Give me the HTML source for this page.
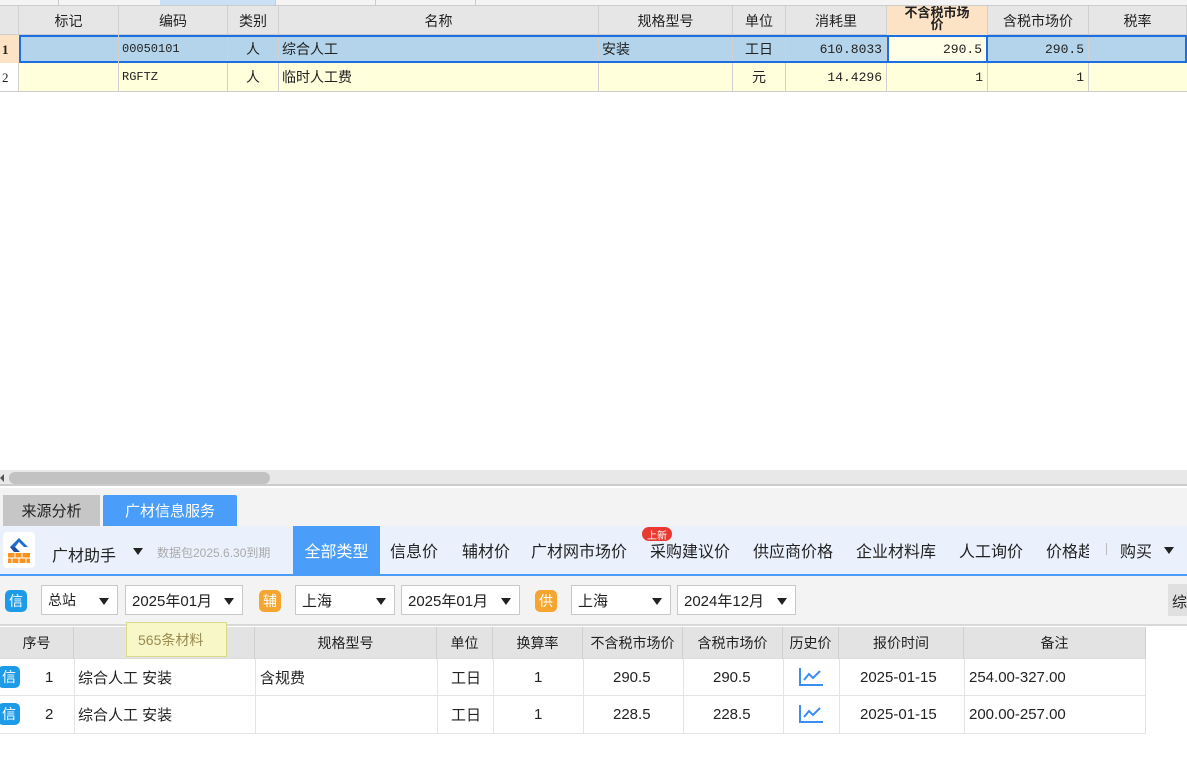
<!DOCTYPE html><html><head><meta charset="utf-8"><style>
*{margin:0;padding:0;box-sizing:border-box}
body{width:1187px;height:780px;background:#fff;position:relative;overflow:hidden;font-family:"Liberation Sans","Noto Sans CJK SC",sans-serif;color:#222}
.a{position:absolute}
.c{position:absolute;display:flex;align-items:center;justify-content:center;font-size:14px;border-right:1px solid #d0d0d0;white-space:nowrap;overflow:hidden}
.r{justify-content:flex-end;padding-right:4px;font-family:"Liberation Mono","Noto Sans CJK SC",monospace;font-size:13px}
.l{justify-content:flex-start;padding-left:3px}
.sel{position:absolute;height:30px;border:1px solid #c8c8c8;background:#fff;font-size:15px;display:flex;align-items:center;padding-left:6px}
.sel:after{content:"";position:absolute;right:8px;top:12px;border:5px solid transparent;border-top:7px solid #222}
.bd{position:absolute;width:22px;height:22px;border-radius:5px;color:#fff;font-size:14px;display:flex;align-items:center;justify-content:center}
.nav{position:absolute;top:526px;height:48px;display:flex;align-items:center;font-size:16px;color:#222;white-space:nowrap}
.t{position:absolute;height:37px;display:flex;align-items:center;font-size:15px}
</style></head><body>
<div class="a" style="left:0;top:0;width:1187px;height:6px;background:#f4f4f4;border-bottom:1px solid #ccc"></div>
<div class="a" style="left:160px;top:0;width:115px;height:5px;background:#c9e0f5"></div>
<div class="a" style="left:58px;top:0;width:1px;height:5px;background:#ccc"></div>
<div class="a" style="left:275px;top:0;width:1px;height:5px;background:#ccc"></div>
<div class="a" style="left:375px;top:0;width:1px;height:5px;background:#ccc"></div>
<div class="a" style="left:475px;top:0;width:1px;height:5px;background:#ccc"></div>
<div class="a" style="left:0;top:6px;width:1187px;height:29px;background:#e6e6e6;border-bottom:1px solid #ccc"></div>
<div class="c" style="left:0;top:6px;width:19px;height:29px"></div>
<div class="c" style="left:19px;top:6px;width:100px;height:29px">标记</div>
<div class="c" style="left:119px;top:6px;width:109px;height:29px">编码</div>
<div class="c" style="left:228px;top:6px;width:51px;height:29px">类别</div>
<div class="c" style="left:279px;top:6px;width:320px;height:29px">名称</div>
<div class="c" style="left:599px;top:6px;width:134px;height:29px">规格型号</div>
<div class="c" style="left:733px;top:6px;width:53px;height:29px">单位</div>
<div class="c" style="left:786px;top:6px;width:101px;height:29px">消耗里</div>
<div class="c" style="left:887px;top:6px;width:101px;height:29px;background:#fde3c6;font-weight:bold;font-size:13px;line-height:12px;text-align:center;white-space:normal;flex-direction:column"><span style="margin-top:-4px">不含税市场</span><span>价</span></div>
<div class="c" style="left:988px;top:6px;width:101px;height:29px">含税市场价</div>
<div class="c" style="left:1089px;top:6px;width:98px;height:29px">税率</div>
<div class="a" style="left:0;top:35px;width:19px;height:28px;background:#fde3c6;font-weight:bold;font-size:13px;font-family:'Liberation Serif',serif;padding:7px 0 0 2px">1</div>
<div class="a" style="left:19px;top:35px;width:1168px;height:28px;background:#b3d4ea;border:2px solid #1c6fe0"></div>
<div class="c l" style="left:119px;top:37px;width:109px;height:24px;font-family:'Liberation Mono',monospace;font-size:12px">00050101</div>
<div class="c" style="left:228px;top:37px;width:51px;height:24px">人</div>
<div class="c l" style="left:279px;top:37px;width:320px;height:24px">综合人工</div>
<div class="c l" style="left:599px;top:37px;width:134px;height:24px">安装</div>
<div class="c" style="left:733px;top:37px;width:53px;height:24px">工日</div>
<div class="c r" style="left:786px;top:37px;width:101px;height:24px">610.8033</div>
<div class="c r" style="left:887px;top:35px;width:101px;height:28px;background:#ffffe8;border:2px solid #1c6fe0">290.5</div>
<div class="c r" style="left:988px;top:37px;width:101px;height:24px">290.5</div>
<div class="c" style="left:1089px;top:37px;width:98px;height:24px;border:0"></div>
<div class="a" style="left:0;top:63px;width:19px;height:29px;background:#fff;font-size:13px;font-family:'Liberation Serif',serif;padding:7px 0 0 2px;border-right:1px solid #d0d0d0;border-bottom:1px solid #ccc">2</div>
<div class="a" style="left:19px;top:63px;width:1168px;height:29px;background:#ffffdc;border-bottom:1px solid #ccc"></div>
<div class="c" style="left:19px;top:63px;width:100px;height:28px"></div>
<div class="c l" style="left:119px;top:63px;width:109px;height:28px;font-family:'Liberation Mono',monospace;font-size:12px">RGFTZ</div>
<div class="c" style="left:228px;top:63px;width:51px;height:28px">人</div>
<div class="c l" style="left:279px;top:63px;width:320px;height:28px">临时人工费</div>
<div class="c" style="left:599px;top:63px;width:134px;height:28px"></div>
<div class="c" style="left:733px;top:63px;width:53px;height:28px">元</div>
<div class="c r" style="left:786px;top:63px;width:101px;height:28px">14.4296</div>
<div class="c r" style="left:887px;top:63px;width:101px;height:28px">1</div>
<div class="c r" style="left:988px;top:63px;width:101px;height:28px">1</div>
<div class="c" style="left:19px;top:35px;width:100px;height:28px;border-right:1px solid #d0d0d0;background:transparent"></div>
<div class="a" style="left:0;top:470px;width:1187px;height:16px;background:#e8e8e8;border-bottom:2px solid #ccc"></div>
<div class="a" style="left:0;top:474px;border:4px solid transparent;border-right:4px solid #555;border-left:0"></div>
<div class="a" style="left:9px;top:472px;width:261px;height:12px;border-radius:6px;background:#c2c2c2"></div>
<div class="a" style="left:0;top:488px;width:1187px;height:38px;background:#f3f3f3"></div>
<div class="a" style="left:3px;top:495px;width:97px;height:31px;background:#c6c6c6;display:flex;align-items:center;justify-content:center;font-size:15px">来源分析</div>
<div class="a" style="left:103px;top:495px;width:134px;height:31px;background:#4a9df8;color:#fff;display:flex;align-items:center;justify-content:center;font-size:15px;border-radius:2px 2px 0 0">广材信息服务</div>
<div class="a" style="left:0;top:526px;width:1187px;height:50px;background:#eaf1fd;border-bottom:2px solid #4a9df8"></div>
<div class="a" style="left:3px;top:532px;width:32px;height:36px;background:#fff;border-radius:4px"></div>
<svg class="a" style="left:6px;top:535px" width="27" height="30" viewBox="0 0 27 30"><path d="M4 12 L13 3 L22 12 L18 12 L13 7 L9 12 Z" fill="#1f6fd1"/><path d="M4 12 L9 12 L14 17 L8 17Z" fill="#1f4fa0"/><rect x="2" y="18" width="22" height="10" fill="#f7931e"/><path d="M2 23H24M9 18V23M16 18V23M6 23V28M13 23V28M20 23V28" stroke="#fff" stroke-width="1"/></svg>
<div class="a" style="left:52px;top:542px;font-size:16px">广材助手</div>
<div class="a" style="left:133px;top:548px;border:5px solid transparent;border-top:7px solid #222"></div>
<div class="a" style="left:157px;top:544px;font-size:12px;color:#aaa">数据包2025.6.30到期</div>
<div class="a" style="left:293px;top:526px;width:87px;height:48px;background:#4a9df8;color:#fff;display:flex;align-items:center;justify-content:center;font-size:16px">全部类型</div>
<div class="nav" style="left:390px">信息价</div>
<div class="nav" style="left:462px">辅材价</div>
<div class="nav" style="left:531px">广材网市场价</div>
<div class="nav" style="left:650px">采购建议价</div>
<div class="nav" style="left:753px">供应商价格</div>
<div class="nav" style="left:856px">企业材料库</div>
<div class="nav" style="left:959px">人工询价</div>
<div class="nav" style="left:1046px;width:43px;overflow:hidden">价格趋势</div>
<div class="a" style="left:1106px;top:543px;width:1px;height:12px;background:#bbb"></div>
<div class="nav" style="left:1120px">购买</div>
<div class="a" style="left:1164px;top:547px;border:5px solid transparent;border-top:7px solid #222"></div>
<div class="a" style="left:642px;top:527px;width:30px;height:14px;background:#e83a30;color:#fff;border-radius:7px;font-size:10px;display:flex;align-items:center;justify-content:center">上新</div>
<div class="a" style="left:0;top:576px;width:1187px;height:50px;background:#f3f3f3;border-bottom:2px solid #d8d8d8"></div>
<div class="bd" style="left:5px;top:590px;background:#1e9be8">信</div>
<div class="sel" style="left:41px;top:585px;width:77px;font-size:14px">总站</div>
<div class="sel" style="left:125px;top:585px;width:118px">2025年01月</div>
<div class="bd" style="left:259px;top:590px;background:#f7a531">辅</div>
<div class="sel" style="left:295px;top:585px;width:100px">上海</div>
<div class="sel" style="left:401px;top:585px;width:119px">2025年01月</div>
<div class="bd" style="left:535px;top:590px;background:#f7a531">供</div>
<div class="sel" style="left:571px;top:585px;width:100px">上海</div>
<div class="sel" style="left:677px;top:585px;width:119px">2024年12月</div>
<div class="a" style="left:1168px;top:584px;width:19px;height:32px;background:#e0e0e0;font-size:15px;padding:7px 0 0 4px;overflow:hidden">综</div>
<div class="a" style="left:0;top:627px;width:1146px;height:32px;background:#e3e3e3;border-bottom:1px solid #ddd"></div>
<div class="c" style="left:0;top:627px;width:74px;height:32px">序号</div>
<div class="c" style="left:74px;top:627px;width:181px;height:32px"></div>
<div class="c" style="left:255px;top:627px;width:182px;height:32px">规格型号</div>
<div class="c" style="left:437px;top:627px;width:56px;height:32px">单位</div>
<div class="c" style="left:493px;top:627px;width:90px;height:32px">换算率</div>
<div class="c" style="left:583px;top:627px;width:100px;height:32px">不含税市场价</div>
<div class="c" style="left:683px;top:627px;width:100px;height:32px">含税市场价</div>
<div class="c" style="left:783px;top:627px;width:56px;height:32px">历史价</div>
<div class="c" style="left:839px;top:627px;width:125px;height:32px">报价时间</div>
<div class="c" style="left:964px;top:627px;width:182px;height:32px">备注</div>
<div class="a" style="left:126px;top:622px;width:101px;height:35px;background:#f7f7c8;border:1px solid #d9d98a;color:#9a8a50;font-size:14px;padding:7px 0 0 11px">565条材料</div>
<div class="a" style="left:0;top:659px;width:1146px;height:37px;border-bottom:1px solid #e4e4e4"></div>
<div class="a" style="left:0;top:696px;width:1146px;height:38px;border-bottom:1px solid #e4e4e4"></div>
<div class="bd" style="left:-2px;top:666px;background:#1e9be8">信</div>
<div class="bd" style="left:-2px;top:703px;background:#1e9be8">信</div>
<div class="t" style="left:45px;top:659px">1</div>
<div class="t" style="left:45px;top:696px">2</div>
<div class="t" style="left:78px;top:659px">综合人工 安装</div>
<div class="t" style="left:78px;top:696px">综合人工 安装</div>
<div class="t" style="left:260px;top:659px">含规费</div>
<div class="t" style="left:451px;top:659px">工日</div>
<div class="t" style="left:451px;top:696px">工日</div>
<div class="t" style="left:534px;top:659px">1</div>
<div class="t" style="left:534px;top:696px">1</div>
<div class="t" style="left:613px;top:659px">290.5</div>
<div class="t" style="left:613px;top:696px">228.5</div>
<div class="t" style="left:713px;top:659px">290.5</div>
<div class="t" style="left:713px;top:696px">228.5</div>
<svg class="a" style="left:798px;top:667px" width="26" height="20"><path d="M2 1V18H25" stroke="#3a8ef0" stroke-width="2" fill="none"/><path d="M6 13L11 7L15 11L22 4" stroke="#3a8ef0" stroke-width="2" fill="none"/></svg>
<svg class="a" style="left:798px;top:704px" width="26" height="20"><path d="M2 1V18H25" stroke="#3a8ef0" stroke-width="2" fill="none"/><path d="M6 13L11 7L15 11L22 4" stroke="#3a8ef0" stroke-width="2" fill="none"/></svg>
<div class="t" style="left:860px;top:659px">2025-01-15</div>
<div class="t" style="left:860px;top:696px">2025-01-15</div>
<div class="t" style="left:969px;top:659px">254.00-327.00</div>
<div class="t" style="left:969px;top:696px">200.00-257.00</div>
<div class="a" style="left:74px;top:659px;width:1px;height:75px;background:#e4e4e4"></div>
<div class="a" style="left:255px;top:659px;width:1px;height:75px;background:#e4e4e4"></div>
<div class="a" style="left:437px;top:659px;width:1px;height:75px;background:#e4e4e4"></div>
<div class="a" style="left:493px;top:659px;width:1px;height:75px;background:#e4e4e4"></div>
<div class="a" style="left:583px;top:659px;width:1px;height:75px;background:#e4e4e4"></div>
<div class="a" style="left:683px;top:659px;width:1px;height:75px;background:#e4e4e4"></div>
<div class="a" style="left:783px;top:659px;width:1px;height:75px;background:#e4e4e4"></div>
<div class="a" style="left:839px;top:659px;width:1px;height:75px;background:#e4e4e4"></div>
<div class="a" style="left:964px;top:659px;width:1px;height:75px;background:#e4e4e4"></div>
<div class="a" style="left:1145px;top:659px;width:1px;height:75px;background:#e4e4e4"></div>
</body></html>
